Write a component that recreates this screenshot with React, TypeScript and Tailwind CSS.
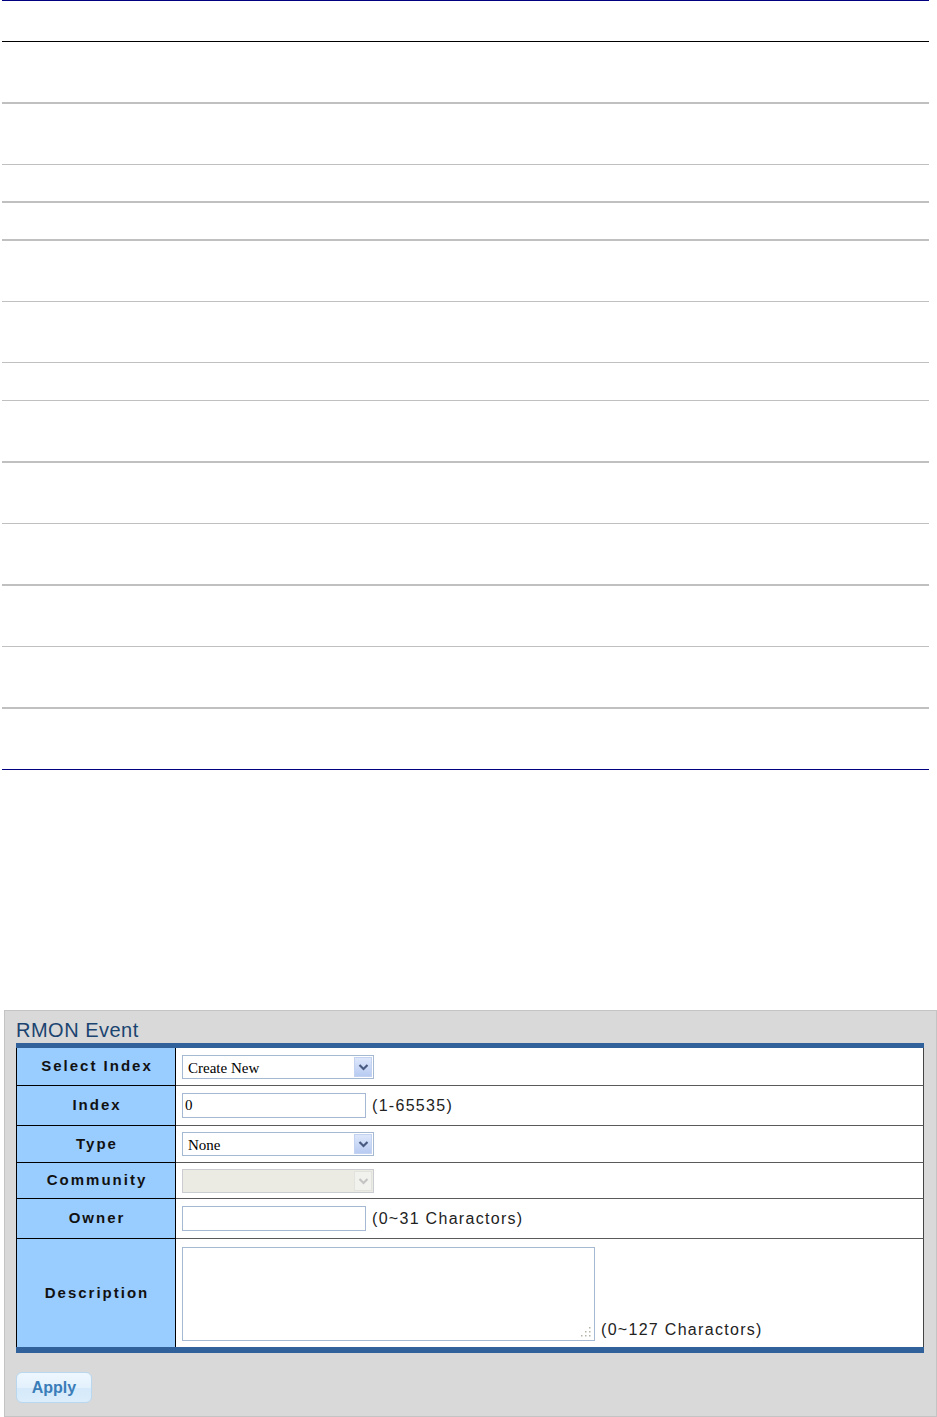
import React from "react";

const serif = "font-['Liberation_Serif','Times_New_Roman',serif]";

function Chevron({ color }: { color: string }) {
  return (
    <svg width="11" height="8" viewBox="0 0 11 8">
      <path d="M1.5 2 L5.5 6 L9.5 2" fill="none" stroke={color} strokeWidth="2.2" />
    </svg>
  );
}

function FakeSelect({ value, disabled }: { value: string; disabled?: boolean }) {
  return (
    <div
      className={
        disabled
          ? "relative w-[192px] h-[24px] border border-[#c9ccd0] bg-[#ebebe4]"
          : "relative w-[192px] h-[24px] border border-[#a6b9d3] bg-white"
      }
    >
      <select
        disabled={disabled}
        defaultValue={value}
        className={`appearance-none w-full h-full pl-[5px] pr-[20px] bg-transparent outline-none text-[15px] leading-[22px] text-black ${serif}`}
      >
        <option value={value}>{value}</option>
      </select>
      <div
        className={
          disabled
            ? "absolute right-[1px] top-[1px] bottom-[1px] w-[18px] flex items-center justify-center bg-[#f1f1ee] border border-[#e2e2de] pointer-events-none"
            : "absolute right-[1px] top-[1px] bottom-[1px] w-[18px] flex items-center justify-center bg-[linear-gradient(to_bottom,#dde7fb,#b8cbf1)] border border-[#c3d2f0] pointer-events-none"
        }
      >
        <Chevron color={disabled ? "#c4c4c4" : "#4a5b82"} />
      </div>
    </div>
  );
}

function Row({
  label,
  h,
  last,
  children,
  alignStart,
}: {
  label: string;
  h: string;
  last?: boolean;
  children: React.ReactNode;
  alignStart?: boolean;
}) {
  return (
    <div className={`flex ${h}`}>
      <div
        className={
          last
            ? "w-[160px] shrink-0 bg-[#99ccff] border-l border-r border-black flex items-center justify-center pl-[2px]"
            : "w-[160px] shrink-0 bg-[#99ccff] border-l border-r border-b border-black flex items-center justify-center pl-[2px]"
        }
      >
        <span className="text-[15px] font-bold tracking-[2px] text-[#111]">{label}</span>
      </div>
      <div
        className={
          (last
            ? "flex-1 bg-white border-r border-[#444] pl-[6px] flex "
            : "flex-1 bg-white border-r border-b border-r-[#444] border-b-[#5a5a5a] pl-[6px] flex ") +
          (alignStart ? "items-start pt-[8px]" : "items-center")
        }
      >
        {children}
      </div>
    </div>
  );
}

const hint = "ml-[6px] text-[16px] tracking-[1.3px] text-[#222]";

export default function App() {
  return (
    <div className="w-[937px] min-h-[1417px] bg-white font-['Liberation_Sans',Arial,sans-serif]">
      <div className="ml-[2px] w-[927px] flex flex-col">
        <div className="h-px bg-[#000080]" />
        <div className="h-[41px] border-b border-black" />
        <div className="h-[62px] border-b-2 border-[#c0c0c0]" />
        <div className="h-[61px] border-b border-[#c0c0c0]" />
        <div className="h-[38px] border-b-2 border-[#c0c0c0]" />
        <div className="h-[38px] border-b-2 border-[#c0c0c0]" />
        <div className="h-[61px] border-b border-[#c0c0c0]" />
        <div className="h-[61px] border-b border-[#c0c0c0]" />
        <div className="h-[38px] border-b border-[#c0c0c0]" />
        <div className="h-[62px] border-b-2 border-[#c0c0c0]" />
        <div className="h-[61px] border-b border-[#c0c0c0]" />
        <div className="h-[62px] border-b-2 border-[#c0c0c0]" />
        <div className="h-[61px] border-b border-[#c0c0c0]" />
        <div className="h-[62px] border-b-2 border-[#c0c0c0]" />
        <div className="h-[61px] border-b border-[#000080]" />
      </div>

      <div className="mt-[240px] ml-[4px] w-[933px] h-[407px] border border-[#c4c4c4] bg-[#d9d9d9] pt-[7px] pl-[11px]">
        <div className="h-[25px] text-[20px] leading-[25px] tracking-[0.5px] text-[#1b4470]">RMON Event</div>
        <div className="w-[908px] flex flex-col">
          <div className="h-[5px] bg-[#30619a]" />
          <Row label="Select Index" h="h-[38px]">
            <FakeSelect value="Create New" />
          </Row>
          <Row label="Index" h="h-[40px]">
            <input
              defaultValue="0"
              className={`w-[184px] h-[25px] border border-[#a6b9d3] pl-[2px] outline-none text-[15px] text-black ${serif}`}
            />
            <span className={hint}>(1-65535)</span>
          </Row>
          <Row label="Type" h="h-[37px]">
            <FakeSelect value="None" />
          </Row>
          <Row label="Community" h="h-[36px]">
            <FakeSelect value="" disabled />
          </Row>
          <Row label="Owner" h="h-[40px]">
            <input className={`w-[184px] h-[25px] border border-[#a6b9d3] pl-[2px] outline-none text-[15px] ${serif}`} />
            <span className={hint}>(0~31 Charactors)</span>
          </Row>
          <Row label="Description" h="h-[108px]" last alignStart>
            <div className="flex items-end">
              <div className="relative w-[413px] h-[94px]">
                <textarea className="w-full h-full border border-[#a6b9d3] resize-none outline-none bg-white block" />
                <svg className="absolute right-[3px] bottom-[3px]" width="12" height="12" viewBox="0 0 12 12">
                  <rect x="9" y="1" width="1.5" height="1.5" fill="#b5b5a5" />
                  <rect x="9" y="5" width="1.5" height="1.5" fill="#b5b5a5" />
                  <rect x="5" y="5" width="1.5" height="1.5" fill="#b5b5a5" />
                  <rect x="9" y="9" width="1.5" height="1.5" fill="#b5b5a5" />
                  <rect x="5" y="9" width="1.5" height="1.5" fill="#b5b5a5" />
                  <rect x="1" y="9" width="1.5" height="1.5" fill="#b5b5a5" />
                </svg>
              </div>
              <span className="ml-[6px] mb-[2px] text-[16px] leading-[18px] tracking-[1.3px] text-[#222]">
                (0~127 Charactors)
              </span>
            </div>
          </Row>
          <div className="h-[6px] bg-[#30619a]" />
        </div>
        <button className="mt-[19px] w-[76px] h-[31px] rounded-[6px] border border-[#b9d7ef] bg-[linear-gradient(to_bottom,#eef7fe_0%,#e3f1fd_50%,#d4e9fa_52%,#dcedfb_100%)] text-[16px] font-bold text-[#3b7db8]">
          Apply
        </button>
      </div>
    </div>
  );
}
